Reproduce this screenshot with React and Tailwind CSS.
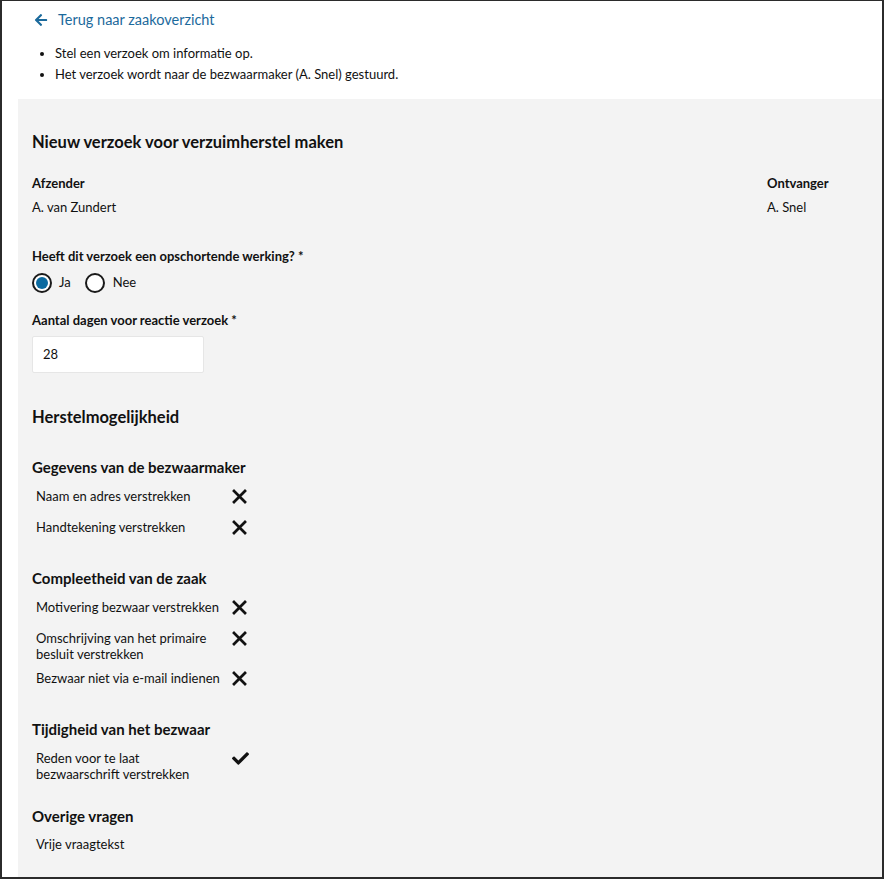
import React from 'react';
import { FaArrowLeft, FaCheck } from 'react-icons/fa';

const Cross = () => (
    <svg width="15" height="15" viewBox="0 0 15 15" className="block">
        <path d="M2 2 L13 13 M13 2 L2 13" stroke="#111" strokeWidth="2.7" strokeLinecap="square" />
    </svg>
);

const Check = () => <FaCheck size={17} className="block -mt-[1px] text-[#111]" />;

// lines zijn vooraf gebroken zoals in het ontwerp
const Row = ({ lines, ok }) => (
    <div className="flex items-start min-h-[23px]">
        <div className="w-[200px] pl-[4px] text-[13px] leading-[16px] whitespace-nowrap">
            {lines.map((l) => (
                <div key={l}>{l}</div>
            ))}
        </div>
        <div className="pt-[1px]">{ok ? <Check /> : <Cross />}</div>
    </div>
);

const Section = ({ title, rows, className }) => (
    <div className={className}>
        <h3 className="text-[15px] leading-[22px] font-bold">{title}</h3>
        <div className="mt-[10px] flex flex-col gap-[8px]">
            {rows.map((r) => (
                <Row key={r.lines[0]} lines={r.lines} ok={r.ok} />
            ))}
        </div>
    </div>
);

export default function App() {
    return (
        <div
            className="w-[884px] h-[879px] border-[#2b2b2b] border-l-2 border-r-2 border-t border-b-2 bg-white text-[#111] flex flex-col overflow-hidden"
            style={{ fontFamily: 'Lato, "Noto Sans", sans-serif' }}
        >
            {/* terug link */}
            <div className="pl-[32px] pt-[9px] flex items-center h-[29px] text-[#1c6a9c]">
                <FaArrowLeft size={14} />
                <span className="ml-[10px] text-[14.5px] leading-[20px]">Terug naar zaakoverzicht</span>
            </div>

            <ul className="mt-[13px] mb-[14px] pl-[53px] list-disc text-[13px] leading-[21px]">
                <li>Stel een verzoek om informatie op.</li>
                <li>Het verzoek wordt naar de bezwaarmaker (A. Snel) gestuurd.</li>
            </ul>

            <div className="ml-[16px] flex-1 bg-[#f3f3f3] pl-[14px] pt-[31px]">
                <h2 className="text-[16.5px] leading-[24px] font-bold">Nieuw verzoek voor verzuimherstel maken</h2>

                <div className="mt-[19px] flex">
                    <div className="flex-1">
                        <div className="text-[13px] leading-[20px] font-bold">Afzender</div>
                        <div className="mt-[4px] text-[13px] leading-[20px]">A. van Zundert</div>
                    </div>
                    <div className="w-[115px]">
                        <div className="text-[13px] leading-[20px] font-bold">Ontvanger</div>
                        <div className="mt-[4px] text-[13px] leading-[20px]">A. Snel</div>
                    </div>
                </div>

                <div className="mt-[29px] text-[13px] leading-[20px] font-bold">
                    Heeft dit verzoek een opschortende werking? *
                </div>
                <div className="mt-[6px] flex items-center h-[22px] text-[13px]">
                    <span className="w-[20px] h-[20px] rounded-full border-2 border-[#1a1a1a] bg-white flex items-center justify-center">
                        <span className="w-[12px] h-[12px] rounded-full bg-[#0b6aa0]" />
                    </span>
                    <span className="ml-[7px]">Ja</span>
                    <span className="ml-[14px] w-[20px] h-[20px] rounded-full border-2 border-[#1a1a1a] bg-white" />
                    <span className="ml-[8px]">Nee</span>
                </div>

                <div className="mt-[16px] text-[13px] leading-[20px] font-bold">Aantal dagen voor reactie verzoek *</div>
                <div className="mt-[6px] w-[172px] h-[37px] bg-white border border-[#e6e6e6] rounded-[2px] pl-[10px] flex items-center text-[13px]">
                    28
                </div>

                <h2 className="mt-[32px] text-[16.5px] leading-[24px] font-bold">Herstelmogelijkheid</h2>

                <Section
                    className="mt-[27px]"
                    title="Gegevens van de bezwaarmaker"
                    rows={[
                        { lines: ['Naam en adres verstrekken'] },
                        { lines: ['Handtekening verstrekken'] },
                    ]}
                />
                <Section
                    className="mt-[25px]"
                    title="Compleetheid van de zaak"
                    rows={[
                        { lines: ['Motivering bezwaar verstrekken'] },
                        { lines: ['Omschrijving van het primaire', 'besluit verstrekken'] },
                        { lines: ['Bezwaar niet via e-mail indienen'] },
                    ]}
                />
                <Section
                    className="mt-[25px]"
                    title="Tijdigheid van het bezwaar"
                    rows={[{ lines: ['Reden voor te laat', 'bezwaarschrift verstrekken'], ok: true }]}
                />

                <h3 className="mt-[23px] text-[15px] leading-[22px] font-bold">Overige vragen</h3>
                <div className="mt-[9px] pl-[4px] text-[13px] leading-[16px]">Vrije vraagtekst</div>
            </div>
        </div>
    );
}
